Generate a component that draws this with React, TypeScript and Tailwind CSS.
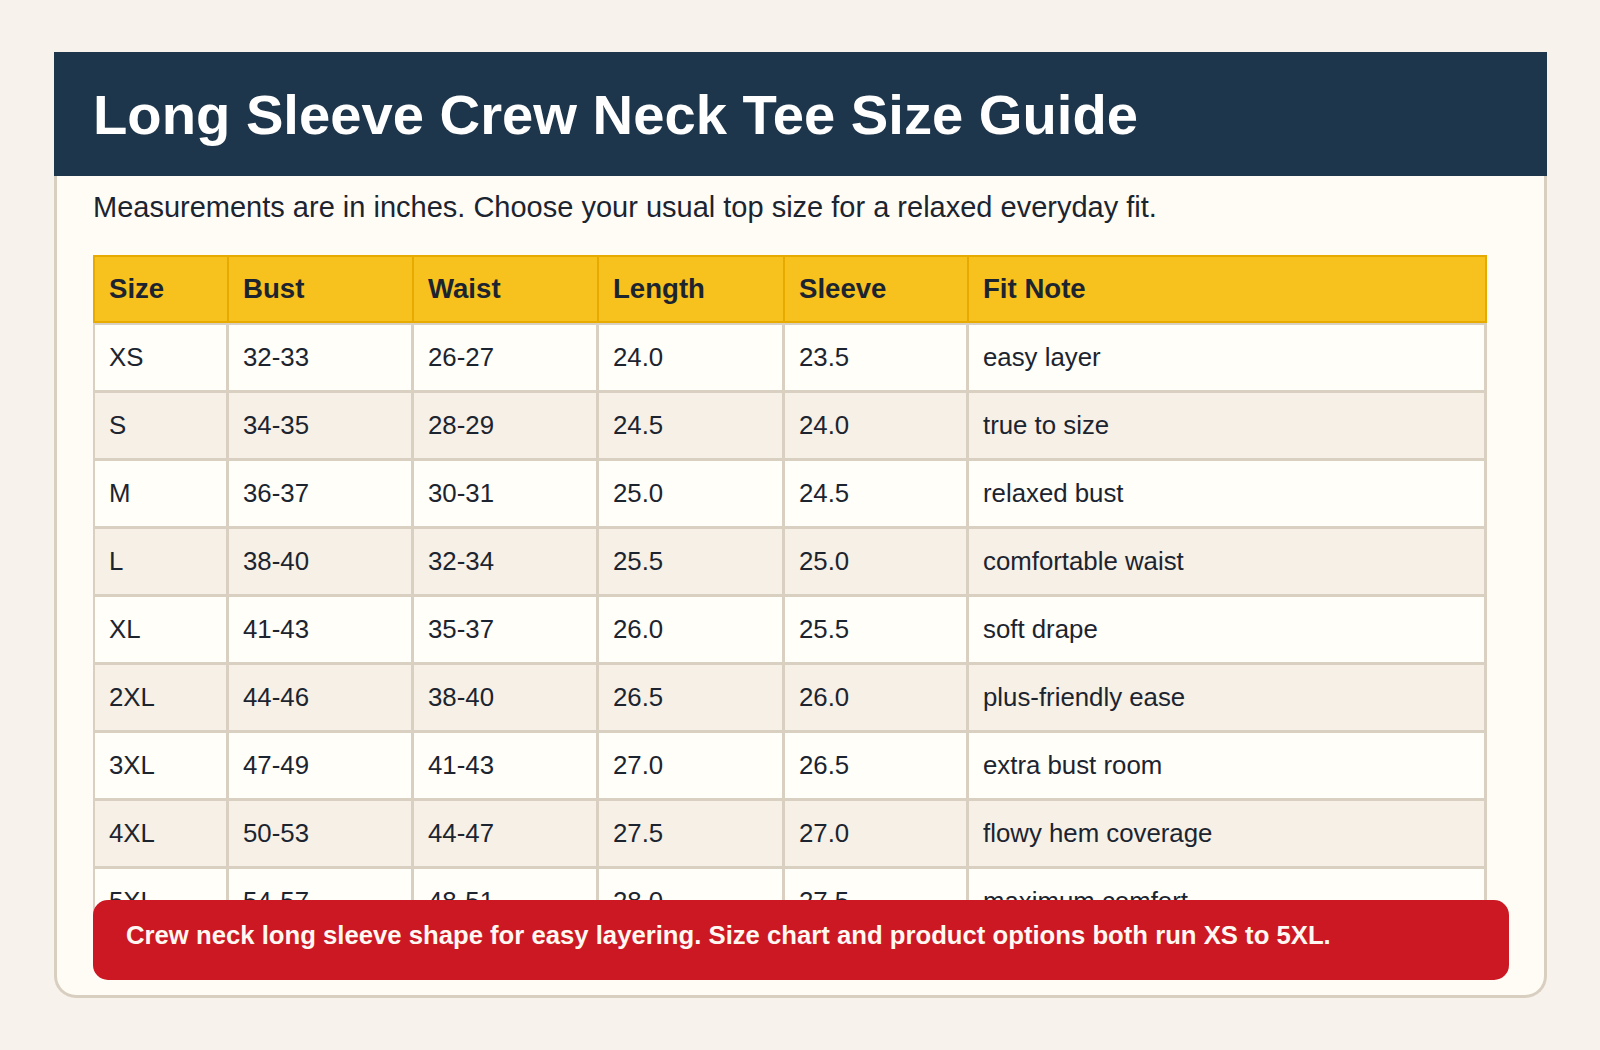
import React from "react";

type SizeRow = {
  size: string;
  bust: string;
  waist: string;
  length: string;
  sleeve: string;
  note: string;
};

const rows: SizeRow[] = [
  { size: "XS", bust: "32-33", waist: "26-27", length: "24.0", sleeve: "23.5", note: "easy layer" },
  { size: "S", bust: "34-35", waist: "28-29", length: "24.5", sleeve: "24.0", note: "true to size" },
  { size: "M", bust: "36-37", waist: "30-31", length: "25.0", sleeve: "24.5", note: "relaxed bust" },
  { size: "L", bust: "38-40", waist: "32-34", length: "25.5", sleeve: "25.0", note: "comfortable waist" },
  { size: "XL", bust: "41-43", waist: "35-37", length: "26.0", sleeve: "25.5", note: "soft drape" },
  { size: "2XL", bust: "44-46", waist: "38-40", length: "26.5", sleeve: "26.0", note: "plus-friendly ease" },
  { size: "3XL", bust: "47-49", waist: "41-43", length: "27.0", sleeve: "26.5", note: "extra bust room" },
  { size: "4XL", bust: "50-53", waist: "44-47", length: "27.5", sleeve: "27.0", note: "flowy hem coverage" },
  { size: "5XL", bust: "54-57", waist: "48-51", length: "28.0", sleeve: "27.5", note: "maximum comfort" },
];

const headers = [
  { label: "Size", width: "w-[136px]" },
  { label: "Bust", width: "w-[185px]" },
  { label: "Waist", width: "w-[185px]" },
  { label: "Length", width: "w-[186px]" },
  { label: "Sleeve", width: "w-[184px]" },
  { label: "Fit Note", width: "w-[518px]" },
];

export default function App() {
  return (
    <div
      className="min-h-[1050px] bg-[#f7f3ec] pl-[54px] pr-[53px] py-[52px]"
      style={{ fontFamily: '"Liberation Sans", Arial, sans-serif' }}
    >
      {/* Card header */}
      <div className="bg-[#1e364b] pl-[39px] pr-[36px] pt-[29px] pb-[28px]">
        <h1 className="text-[56.2px] font-bold leading-[1.2] text-white">
          Long Sleeve Crew Neck Tee Size Guide
        </h1>
      </div>

      {/* Card body */}
      <div className="relative h-[822px] overflow-hidden rounded-b-[22px] border-x-[3px] border-b-[3px] border-[#d9cfc0] bg-[#fffcf5] px-[36px]">
        <p className="pt-[15px] mb-[31px] text-[29px] leading-[33px] text-[#1c2430]">
          Measurements are in inches. Choose your usual top size for a relaxed everyday fit.
        </p>

        <table className="w-[1394px] table-fixed border-separate border-spacing-0 text-left text-[#1c2430]">
          <thead>
            <tr>
              {headers.map((h, i) => (
                <th
                  key={h.label}
                  className={`${h.width} border-t-2 border-r-2 border-b-2 border-[#e6aa00] bg-[#f7c11e] px-[14px] py-[15px] text-[27.6px] font-bold leading-[34px] ${
                    i === 0 ? "border-l-2" : ""
                  }`}
                >
                  {h.label}
                </th>
              ))}
            </tr>
          </thead>
          <tbody>
            {rows.map((r, ri) => {
              const cells = [r.size, r.bust, r.waist, r.length, r.sleeve, r.note];
              return (
                <tr key={r.size} className={ri % 2 === 0 ? "bg-[#fffef8]" : "bg-[#f6f0e6]"}>
                  {cells.map((c, ci) => (
                    <td
                      key={ci}
                      className={`border-r-[3px] border-b-[3px] border-[#d9d0c2] px-[14px] pt-[17px] pb-[18px] text-[25.8px] leading-[30px] ${
                        ci === 0 ? "border-l-2" : ""
                      } ${ri === 0 ? "border-t-2" : ""}`}
                    >
                      {c}
                    </td>
                  ))}
                </tr>
              );
            })}
          </tbody>
        </table>

        {/* Footer note */}
        <div className="absolute left-[36px] right-[35px] bottom-[15px] rounded-[15px] bg-[#cb1823] pl-[33px] pr-[24px] pt-[17px] pb-[27px]">
          <p className="text-[25.7px] font-bold leading-[36px] text-[#fff8f2]">
            Crew neck long sleeve shape for easy layering. Size chart and product options both run XS to 5XL.
          </p>
        </div>
      </div>
    </div>
  );
}
